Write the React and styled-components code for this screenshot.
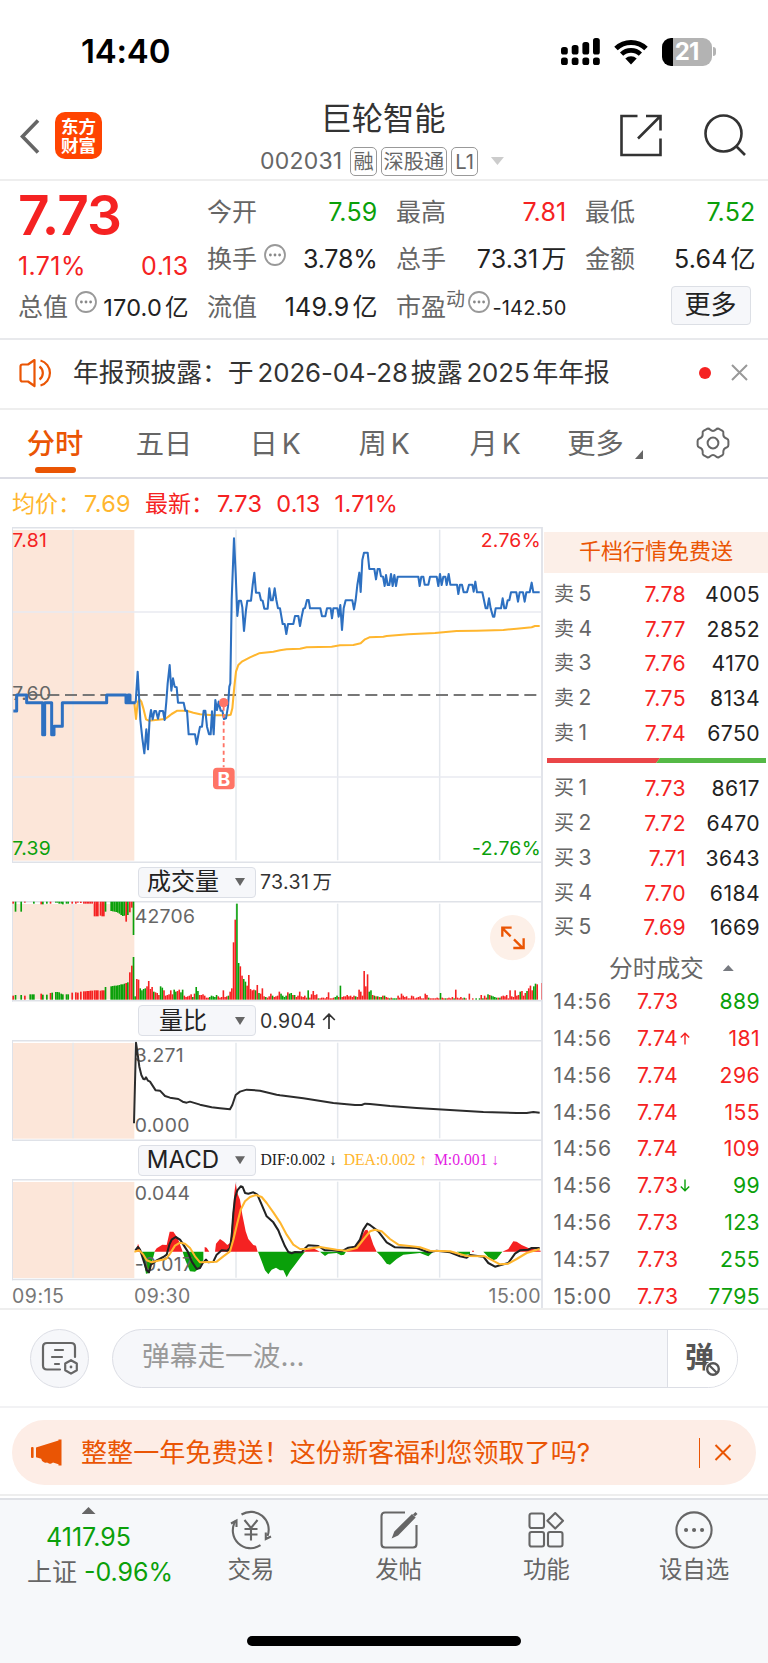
import styled, { createGlobalStyle } from "styled-components";

const RED = "#f52222";
const GREEN = "#0aa00a";
const ORANGE = "#ea5504";
const GRAY = "#666";
const YELLOW = "#ffb62e";

const sells = [
    ["卖", 5, "7.78", 4005],
    ["卖", 4, "7.77", 2852],
    ["卖", 3, "7.76", 4170],
    ["卖", 2, "7.75", 8134],
    ["卖", 1, "7.74", 6750],
];

const buys = [
    ["买", 1, "7.73", 8617],
    ["买", 2, "7.72", 6470],
    ["买", 3, "7.71", 3643],
    ["买", 4, "7.70", 6184],
    ["买", 5, "7.69", 1669],
];

const deals = [
    { time: "14:56", price: "7.73", volume: 889, color: GREEN },
    { time: "14:56", price: "7.74", arrow: "up", volume: 181, color: RED },
    { time: "14:56", price: "7.74", volume: 296, color: RED },
    { time: "14:56", price: "7.74", volume: 155, color: RED },
    { time: "14:56", price: "7.74", volume: 109, color: RED },
    { time: "14:56", price: "7.73", arrow: "down", volume: 99, color: GREEN },
    { time: "14:56", price: "7.73", volume: 123, color: GREEN },
    { time: "14:57", price: "7.73", volume: 255, color: GREEN },
    { time: "15:00", price: "7.73", volume: 7795, color: GREEN },
];

// chart units are a third of a pixel
const PRE_PRICE = "40,573 50,573 50,525 80,525 80,548 128,548 128,644 134,644 134,548 155,548 155,644 162,644 162,619 187,619 187,548 320,548 320,525 378,525 378,548 384,548 384,525 390,525 390,548 407,548";
const AM_PRICE = "407,548 413,455 421,600 427,655 433,700 439,628 444,688 449,595 453,570 458,598 463,573 468,573 474,596 479,573 489,573 494,600 499,545 503,490 509,435 514,512 519,475 524,500 530,502 534,548 551,548 556,572 561,572 566,643 585,643 590,673 595,645 600,620 606,620 611,572 616,572 621,620 627,643 632,643 636,574 641,643 646,540 651,570 656,545 662,572 667,572 672,597 678,595 684,560 688,500 691,490 695,240 702,55 707,160 712,288 717,242 723,242 727,262 732,333 738,270 742,242 753,242 758,195 763,158 768,218 778,218 783,241 788,242 793,266 803,266 808,205 813,241 818,241 824,205 829,240 834,265";
const PM_PRICE = "30,265 38,312 44,312 49,342 54,312 70,312 75,288 85,288 90,318 95,290 100,266 105,264 111,240 116,240 120,265 151,265 156,289 166,289 171,265 182,265 186,295 190,265 202,265 206,290 211,255 216,330 221,265 227,241 247,241 252,268 257,240 262,195 268,158 272,216 277,120 282,98 293,98 298,147 313,147 318,178 323,147 329,147 333,169 339,170 344,198 348,165 353,195 358,195 363,162 368,198 373,165 378,198 383,170 445,170 449,198 454,170 460,170 464,194 475,194 480,170 500,170 505,198 510,162 515,195 520,170 526,170 530,195 536,162 541,194 561,194 565,222 570,194 576,194 581,217 591,217 597,194 607,194 611,215 616,185 621,217 637,217 647,265 652,265 657,235 662,265 669,290 673,290 677,265 693,265 698,235 703,265 708,265 713,241 718,241 723,217 739,217 744,245 749,217 759,217 764,245 769,217 779,217 785,188 790,217 809,217";
const AM_AVG = "403,548 408,597 413,548 418,537 424,545 430,565 438,598 446,602 495,597 505,590 515,582 532,572 560,572 580,578 600,583 640,586 685,586 692,584 697,565 703,500 708,455 715,435 727,424 750,412 777,400 820,395";
const PM_AVG = "30,391 50,388 90,386 110,382 185,380 210,376 250,375 272,370 285,358 298,352 340,350 350,348 415,343 495,339 560,333 620,332 700,330 740,326 785,322 795,318 809,318";
const AM_RATIO = "402,790 408,548 412,575 418,620 424,645 430,657 434,658 438,652 444,662 450,665 467,691 480,692 495,708 510,713 535,717 548,725 560,728 570,725 600,734 635,742 660,745 690,748 697,735 707,705 720,695 740,689 780,692 830,704";
const PM_RATIO = "30,706 100,715 190,729 255,735 275,735 285,731 300,732 360,738 440,744 540,750 640,756 740,759 770,759 790,756 809,758";
const AM_DIF = "406,332 414,322 420,330 425,345 433,370 440,392 447,398 453,375 470,362 490,352 500,345 508,315 515,300 527,292 540,300 550,315 563,335 575,365 590,388 600,385 608,370 618,360 625,368 640,366 650,345 665,332 682,333 690,325 695,290 700,220 705,175 712,152 722,140 728,142 735,160 745,162 760,158 772,165 785,195 800,230 820,248 835,272";
const PM_DIF = "30,285 45,320 55,337 65,341 75,337 95,338 103,328 115,317 145,319 165,332 185,332 215,335 235,324 255,321 270,300 280,270 292,252 300,256 325,275 350,308 375,323 440,325 475,338 500,333 540,338 570,350 590,354 600,346 640,351 655,370 675,381 690,377 715,370 735,342 750,332 775,330 785,325 809,325";
const AM_DEA = "403,336 418,332 430,345 440,362 455,368 480,362 498,358 510,342 525,318 540,309 555,312 570,325 585,350 600,368 650,366 670,350 690,335 700,300 712,250 722,210 735,185 750,172 768,166 785,172 800,190 820,218";
const PM_DEA = "30,248 50,285 70,315 90,328 110,328 150,322 200,330 228,333 260,325 280,300 300,275 315,270 335,275 360,298 385,315 450,323 480,333 540,335 590,349 645,350 690,374 715,372 740,358 770,340 809,328";

const AM_MACD_UP = "M408 336L414 312L424 336Z M463 336L470 326L487 315L500 316L509 276L520 276L533 295L548 336Z M614 336V322L620 324L628 336Z M645 336L648 312L660 298L672 306L682 316L690 310L697 240L703 160L707 130L712 160L720 180L727 225L737 275L745 298L760 316L768 318L773 336Z";
const AM_MACD_DOWN = "M424 336L430 360L438 402L448 400L455 370L464 336Z M548 336L556 362L570 395L585 396L598 385L610 360V336Z M774 336L785 365L795 392L805 404L815 390L828 384L840 392H850L860 413L870 395L885 375L900 355L915 336Z";
const PM_MACD_UP = "M100 336L115 326H130L150 336Z M228 336L250 325L262 315L275 290L285 272L292 270L300 285L310 315L320 336Z M606 336V333H612V336Z M697 336L715 328L730 305L740 306L755 316L775 325L812 333V336Z";
const PM_MACD_DOWN = "M150 336L165 349L175 342L200 340L213 347L222 345L228 336Z M320 336L335 352L350 372L360 375L380 358L400 345L450 340L475 350L490 336Z M560 336L580 346L600 344V336Z M640 336L655 352L670 362L680 358L697 336Z";

const VOLUME = (
    "g10 r62 r60 g34 g28 g32 g34 r40 r56 r32 r38 g24 r22 r20 r14 g40 g36 r28 r12 r14 r16 r28 r16 g30 g24 r26 r30 g22 g30 r12 " +
    "r8 r10 r12 r16 g8 r18 g38 g26 r14 r14 r16 r12 r6 r6 g8 g12 g10 g8 g14 r10 r6 r8 r28 r8 r10 g12 r24 " +
    "r34 r172 r240 g288 g110 r100 r72 g62 g54 r42 r74 r32 r28 r30 g28 r44 g20 r18 r34 r10 g8 r6 r10 r18 g12 r8 r10 r12 r24 g18 " +
    "g12 g8 g12 r22 g18 g20 r14 g14 r8 r12 r24 r10 r8 r12 r6 g28 r6 r16 r26 r14 r16 g4 r4 r6 r6 r4 r8 r22 " +
    "r4 r4 r6 g8 g12 r8 g42 r8 r10 r10 r14 r10 r12 r8 r12 g10 r8 r30 r24 r12 r86 r40 r76 g24 g28 r14 g12 r10 " +
    "g10 r8 g8 r12 g12 r8 r6 g4 r6 g4 g4 g4 r12 r6 r18 r12 r8 r10 r4 r4 r12 r10 r4 r6 r8 r10 r4 r4 r18 r14 " +
    "g6 r4 r4 r4 r4 r6 r4 g20 r6 r4 g4 r4 r6 r4 r8 g4 r30 r6 r4 r8 r4 g6 r4 r0 r18 r0 r4 r0 " +
    "g4 r0 g4 r14 g4 r12 r6 g16 r14 g12 g10 g8 g6 r6 g6 r10 r12 r10 r14 r4 r28 r10 r8 r28 r12 r14 g24 " +
    "r26 r12 r20 g26 r34 r42 r28 g40 g48 r46 r0 r0 r50"
).split(" ");

// call auction: matched volume grows from the bottom, unmatched hangs from the top
const AUCTION = [
    [37, "r", 12, 6], [44, "g", 14, 30], [61, "g", 14, 30], [72, "r", 12, 3], [88, "g", 16, 0], [94, "g", 16, 0],
    [99, "g", 16, 6], [121, "r", 18, 8], [126, "g", 15, 8], [138, "g", 15, 6], [149, "r", 20, 6], [154, "g", 21, 0],
    [165, "g", 23, 3], [170, "g", 23, 3], [175, "g", 22, 6], [181, "g", 18, 6], [186, "g", 16, 8], [197, "g", 16, 6],
    [202, "g", 16, 6], [214, "r", 21, 6], [225, "r", 22, 6], [231, "r", 21, 3], [240, "r", 24, 4], [249, "r", 25, 6],
    [254, "r", 25, 6], [259, "r", 26, 6], [264, "r", 26, 6], [269, "r", 27, 6], [274, "r", 27, 6], [281, "r", 28, 44],
    [286, "r", 28, 44], [291, "r", 28, 44], [299, "r", 27, 42], [304, "r", 28, 44], [309, "r", 28, 44], [314, "g", 38, 30],
    [331, "g", 40, 28], [336, "g", 41, 29], [341, "g", 42, 30], [346, "g", 42, 31], [351, "g", 43, 33], [356, "g", 44, 36],
    [361, "g", 46, 40], [366, "g", 46, 43], [371, "g", 48, 42], [376, "r", 50, 60], [381, "g", 52, 40], [387, "r", 82, 32],
    [393, "r", 102, 18], [398, "g", 128, 100],
];

const barColor = { r: RED, g: GREEN };

function Pane({ y, height, guides, children }) {
    return (
        <PaneSvg $height={height / 3} viewBox={`36 ${y} 1590 ${height}`}>
            <rect x="38" y={y + 9} width="365" height={height - 16} fill="#fce6d9" />
            {[219, 708, 1013, 1319].map((x) => (
                <path key={x} d={`M${x} ${y + 8}V${y + height - 8}`} stroke="#e4e8ed" strokeWidth="4.5" />
            ))}
            {guides?.map((gy) => (
                <path key={gy} d={`M38 ${gy}H1624`} stroke="#e8eaf0" strokeWidth="4.5" />
            ))}
            <path d={`M36 ${y + 2}H1626M36 ${y + height - 2.5}H1626`} stroke="#dfe2e8" strokeWidth="4.5" />
            <path d={`M37.5 ${y}V${y + height}`} stroke="#dfe2e9" strokeWidth="3" />
            {children}
        </PaneSvg>
    );
}

function Line({ am, pm, color, width = 4.5 }) {
    const shifted = pm.split(" ").map((p) => {
        const [x, y] = p.split(",");
        return `${+x + 810},${y}`;
    });
    return <polyline points={`${am} ${shifted.join(" ")}`} fill="none" stroke={color} strokeWidth={width} strokeLinejoin="round" />;
}

function PriceChart() {
    return (
        <Pane y={21} height={1008} guides={[276, 771]}>
            <path d="M38 525H1614" stroke="#777" strokeWidth="6.5" strokeDasharray="36 17" strokeDashoffset="2" />
            <ChartText x="37" y="80" fill={RED}>7.81</ChartText>
            <ChartText x="37" y="541" fill={GRAY}>7.60</ChartText>
            <ChartText x="37" y="1004" fill={GREEN}>7.39</ChartText>
            <ChartText x="1623" y="80" fill={RED} textAnchor="end">2.76%</ChartText>
            <ChartText x="1623" y="1004" fill={GREEN} textAnchor="end">-2.76%</ChartText>
            <Line am={AM_AVG} pm={PM_AVG} color={YELLOW} width={6.2} />
            <polyline points={PRE_PRICE} fill="none" stroke="#2d70c1" strokeWidth="9" strokeLinejoin="round" />
            <Line am={AM_PRICE} pm={PM_PRICE} color="#2d70c1" width={6.2} />
            <path d="M671 560V742" stroke="#ff7466" strokeWidth="5.5" strokeDasharray="12 10" />
            <circle cx="671" cy="548" r="14" fill="#ff7466" />
            <rect x="639" y="743" width="65" height="65" rx="12" fill="#ff7466" />
            <BuyMark x="671.5" y="797">B</BuyMark>
        </Pane>
    );
}

function VolumeChart() {
    return (
        <Pane y={122} height={302}>
            {AUCTION.map(([x, c, h, top]) => (
                <g key={x} fill={barColor[c]}>
                    <rect x={x} y={418 - h} width="5" height={h} />
                    <rect x={x} y="124" width="5" height={top} />
                </g>
            ))}
            {VOLUME.map((v, i) => {
                const h = +v.slice(1);
                return <rect key={i} x={403 + i * 5.09} y={418 - h} width="4.8" height={h} fill={barColor[v[0]]} />;
            })}
            <ChartText x="404" y="187" fill={GRAY}>42706</ChartText>
            <circle cx="1538" cy="232" r="68" fill="#fdf0e8" />
            <path d="M1532 228L1508 204M1507 229V202H1535M1542 237L1567 262M1571 234V263H1540" fill="none" stroke={ORANGE} strokeWidth="7" />
        </Pane>
    );
}

function RatioChart() {
    return (
        <Pane y={540} height={303}>
            <ChartText x="404" y="605" fill={GRAY}>3.271</ChartText>
            <ChartText x="404" y="817" fill={GRAY}>0.000</ChartText>
            <Line am={AM_RATIO} pm={PM_RATIO} color="#2c2c2c" width={6} />
        </Pane>
    );
}

function MacdChart() {
    return (
        <Pane y={118} height={304}>
            <path d={AM_MACD_UP} fill={RED} />
            <path d={AM_MACD_DOWN} fill={GREEN} />
            <path d={PM_MACD_UP} fill={RED} transform="translate(810)" />
            <path d={PM_MACD_DOWN} fill={GREEN} transform="translate(810)" />
            <ChartText x="404" y="182" fill={GRAY}>0.044</ChartText>
            <ChartText x="404" y="395" fill={GRAY}>-0.017</ChartText>
            <Line am={AM_DIF} pm={PM_DIF} color="#222" width={6.2} />
            <Line am={AM_DEA} pm={PM_DEA} color={YELLOW} width={6.2} />
        </Pane>
    );
}

function Indicator({ name, children }) {
    return (
        <IndicatorBar>
            <IndicatorSelect>
                <span>{name}</span>
                <Triangle $w={10} $h={8} $down />
            </IndicatorSelect>
            {children}
        </IndicatorBar>
    );
}

function InfoDots() {
    return (
        <InfoIcon viewBox="0 0 24 24">
            <circle cx="12" cy="12" r="10" fill="none" stroke="#999" strokeWidth="1.8" />
            <circle cx="7.4" cy="12" r="1.4" fill="#888" />
            <circle cx="12" cy="12" r="1.4" fill="#888" />
            <circle cx="16.6" cy="12" r="1.4" fill="#888" />
        </InfoIcon>
    );
}

function StatusBar() {
    return (
        <Status>
            <Clock>14:40</Clock>
            <StatusIcons>
                <svg width="39" height="28" viewBox="0 0 39 28">
                    {[[0, 9], [10.7, 7], [21.4, 4], [32, 0]].map(([x, y]) => (
                        <g key={x}>
                            <rect x={x} y={y} width="6.8" height={16.5 - y} rx="2.6" />
                            <rect x={x} y="19.5" width="6.8" height="7.5" rx="2.6" />
                        </g>
                    ))}
                </svg>
                <svg width="34" height="26" viewBox="0 0 34 26">
                    <path d="M2 9.5A21.5 21.5 0 0 1 32 9.5" fill="none" stroke="#000" strokeWidth="5" />
                    <path d="M7.6 15.2A13.5 13.5 0 0 1 26.4 15.2" fill="none" stroke="#000" strokeWidth="4.6" />
                    <path d="M17 25.5L11.3 19.6A8.2 8.2 0 0 1 22.7 19.6Z" />
                </svg>
                <Battery>
                    <BatteryBody>21</BatteryBody>
                    <BatteryTip />
                </Battery>
            </StatusIcons>
        </Status>
    );
}

function Header() {
    return (
        <HeaderBar>
            <HeaderLeft>
                <svg width="20" height="35" viewBox="0 0 20 35">
                    <path d="M18 1.5L2.5 17.5L18 33.5" fill="none" stroke="#666" strokeWidth="3.6" />
                </svg>
                <AppLogo>
                    <span>东方</span>
                    <span>财富</span>
                </AppLogo>
            </HeaderLeft>
            <TitleBlock>
                <Title>巨轮智能</Title>
                <CodeRow>
                    <Code>002031</Code>
                    <Badge>融</Badge>
                    <Badge>深股通</Badge>
                    <Badge $pad={3}>L1</Badge>
                    <CodeCaret $w={13} $h={8} $down $color="#ccc" />
                </CodeRow>
            </TitleBlock>
            <HeaderRight>
                <svg width="44" height="44" viewBox="0 0 44 44" fill="none" stroke="#333" strokeWidth="2.6">
                    <path d="M18.5 3H2.5V42H41.5V25.5" />
                    <path d="M27 3H41.5V17.5M41 3.5L19 25.5" />
                </svg>
                <svg width="44" height="44" viewBox="0 0 44 44" fill="none" stroke="#333" strokeWidth="2.6">
                    <circle cx="20.5" cy="20.5" r="18" />
                    <path d="M33.5 33.5L42 42" />
                </svg>
            </HeaderRight>
        </HeaderBar>
    );
}

function Quote() {
    return (
        <QuotePanel>
            <QuoteColumn>
                <LastPrice>7.73</LastPrice>
                <ChangeRow>
                    <span>1.71%</span>
                    <span>0.13</span>
                </ChangeRow>
                <QuoteRow>
                    <Label>总值<InfoDots /></Label>
                    <Value $size={23.5}>170.0<Unit>亿</Unit></Value>
                </QuoteRow>
            </QuoteColumn>
            <QuoteColumn>
                <QuoteRow><Label>今开</Label><Value $color={GREEN}>7.59</Value></QuoteRow>
                <QuoteRow><Label>换手<InfoDots /></Label><Value $spacing={-0.2}>3.78%</Value></QuoteRow>
                <QuoteRow><Label>流值</Label><Value>149.9<Unit>亿</Unit></Value></QuoteRow>
            </QuoteColumn>
            <QuoteColumn>
                <QuoteRow><Label>最高</Label><Value $color={RED}>7.81</Value></QuoteRow>
                <QuoteRow><Label>总手</Label><Value>73.31<Unit>万</Unit></Value></QuoteRow>
                <QuoteRow><Label>市盈<Sup>动</Sup><InfoDots /></Label><Value $size={20} $drop={3}>-142.50</Value></QuoteRow>
            </QuoteColumn>
            <QuoteColumn>
                <QuoteRow><Label>最低</Label><Value $color={GREEN}>7.52</Value></QuoteRow>
                <QuoteRow><Label>金额</Label><Value>5.64<Unit>亿</Unit></Value></QuoteRow>
                <QuoteRow $end><MoreButton>更多</MoreButton></QuoteRow>
            </QuoteColumn>
        </QuotePanel>
    );
}

function Notice() {
    return (
        <NoticeBar>
            <svg width="34" height="30" viewBox="0 0 34 30" fill="none" stroke={ORANGE} strokeWidth="2.2" strokeLinejoin="round">
                <path d="M15.5 2L9 6.5H3.5Q1.5 6.5 1.5 8.5V21.5Q1.5 23.5 3.5 23.5H9L15.5 28Z" />
                <path d="M20.5 8.5A8 8 0 0 1 20.5 21.5M21.5 2.5A13 13 0 0 1 21.5 27.5" />
            </svg>
            <NoticeText>
                年报预披露：于<Latin>2026-04-28</Latin>披露<Latin>2025</Latin>年年报
            </NoticeText>
            <RedDot />
            <svg width="17" height="17" viewBox="0 0 17 17" stroke="#999" strokeWidth="2">
                <path d="M1 1L16 16M16 1L1 16" />
            </svg>
        </NoticeBar>
    );
}

function Tabs() {
    return (
        <TabBar>
            <Tab $active>分时</Tab>
            <Tab>五日</Tab>
            <Tab>日<Latin>K</Latin></Tab>
            <Tab>周<Latin>K</Latin></Tab>
            <Tab>月<Latin>K</Latin></Tab>
            <Tab>更多<CornerMark viewBox="0 0 8 9"><path d="M8 0V9H0Z" /></CornerMark></Tab>
            <GearTab>
                <svg width="34" height="32" viewBox="0 0 34 32" fill="none" stroke="#666" strokeWidth="2">
                    <path d="M11 1.8Q13 1.2 14 2.6Q17 5.4 20 2.6Q21 1.2 23 1.8L26.5 3.8Q27.8 4.8 27.3 6.5Q27 10.5 31 11.8Q32.4 12.3 32.4 14V18Q32.4 19.7 31 20.2Q27 21.5 27.3 25.5Q27.8 27.2 26.5 28.2L23 30.2Q21 30.8 20 29.4Q17 26.6 14 29.4Q13 30.8 11 30.2L7.5 28.2Q6.2 27.2 6.7 25.5Q7 21.5 3 20.2Q1.6 19.7 1.6 18V14Q1.6 12.3 3 11.8Q7 10.5 6.7 6.5Q6.2 4.8 7.5 3.8Z" />
                    <circle cx="17" cy="16" r="5.4" />
                </svg>
            </GearTab>
        </TabBar>
    );
}

function BookRow({ side, level, price, volume }) {
    return (
        <BookLine>
            <BookSide>{side}<i>{level}</i></BookSide>
            <BookPrice>{price}</BookPrice>
            <BookVolume>{volume}</BookVolume>
        </BookLine>
    );
}

function DealArrow({ dir }) {
    return (
        <svg width="10" height="13" viewBox="0 0 10 13" fill="none" stroke={dir === "up" ? RED : GREEN} strokeWidth="1.4">
            <path d={dir === "up" ? "M5 12.5V1.5M0.8 5.6L5 1.2L9.2 5.6" : "M5 0.5V11.5M0.8 7.4L5 11.8L9.2 7.4"} />
        </svg>
    );
}

function OrderBook() {
    return (
        <Book>
            <Promo>千档行情免费送</Promo>
            <BookGroup>
                {sells.map(([side, level, price, volume]) => (
                    <BookRow key={level} side={side} level={level} price={price} volume={volume} />
                ))}
            </BookGroup>
            <RatioBar viewBox="0 0 219 5">
                <path d="M0 0H113L109 5H0Z" fill="#ea4648" />
                <path d="M113 0H219V5H109Z" fill="#55b946" />
            </RatioBar>
            <BookGroup>
                {buys.map(([side, level, price, volume]) => (
                    <BookRow key={level} side={side} level={level} price={price} volume={volume} />
                ))}
            </BookGroup>
            <DealsTitle>分时成交<Triangle $w={11} $h={6} $color="#777a80" /></DealsTitle>
            {deals.map((d, i) => (
                <DealLine key={i}>
                    <DealTime>{d.time}</DealTime>
                    <DealPrice>{d.price}{d.arrow && <DealArrow dir={d.arrow} />}</DealPrice>
                    <DealVolume $color={d.color}>{d.volume}</DealVolume>
                </DealLine>
            ))}
        </Book>
    );
}

function DanmuBar() {
    return (
        <Danmu>
            <RoundButton>
                <svg width="38" height="34" viewBox="0 0 38 34" fill="none" stroke="#666" strokeWidth="2.2" strokeLinecap="round">
                    <path d="M19 28.5H6Q2 28.5 2 24.5V6Q2 2 6 2H30Q34 2 34 6V16" />
                    <path d="M14 9H22M11 16H21M14 23H18" />
                    <path d="M30 19.2L35.8 22.5V29.2L30 32.6L24.2 29.2V22.5Z" strokeLinejoin="round" />
                    <circle cx="30" cy="26" r="1.4" fill="#666" stroke="none" />
                </svg>
            </RoundButton>
            <DanmuInput>
                <Placeholder>弹幕走一波...</Placeholder>
                <DanmuToggle>
                    <span>弹</span>
                    <BanIcon viewBox="0 0 16 16">
                        <circle cx="8" cy="8" r="8" fill="#fff" />
                        <circle cx="8" cy="8" r="5.8" fill="none" stroke="#555" strokeWidth="2.4" />
                        <path d="M4.5 4.5L11.5 11.5" stroke="#555" strokeWidth="2.2" />
                    </BanIcon>
                </DanmuToggle>
            </DanmuInput>
        </Danmu>
    );
}

function Banner() {
    return (
        <BannerWrap>
            <BannerPill>
                <svg width="31" height="27" viewBox="0 0 31 27" fill={ORANGE}>
                    <rect x="0" y="8" width="2.6" height="11" rx="1" />
                    <path d="M5 8.5L27.5 1.5V0.5H30.5V26.5H27.5V25.2L22 23.5Q20.5 25.2 18 24.4L16 23.6Q14.6 24 13 23.2Q10.4 22.2 10.2 19.8L5 18.2Z" />
                </svg>
                <BannerText>整整一年免费送！这份新客福利您领取了吗?</BannerText>
                <BannerDivider />
                <svg width="18" height="17" viewBox="0 0 18 17" stroke={ORANGE} strokeWidth="2">
                    <path d="M1.5 1L16.5 16M16.5 1L1.5 16" />
                </svg>
            </BannerPill>
        </BannerWrap>
    );
}

function BottomNav() {
    return (
        <Nav>
            <IndexBlock>
                <Triangle $w={14} $h={7} />
                <IndexValue>4117.95</IndexValue>
                <IndexChange>上证<span>-0.96%</span></IndexChange>
            </IndexBlock>
            <NavItem>
                <NavIcon viewBox="0 0 42 40">
                    <path d="M11.5 4.5A17.8 17.8 0 0 1 37.5 26M30.5 35.2A17.8 17.8 0 0 1 5.5 11" />
                    <path d="M1 13.5L6.5 10.5V17M41 26.5L35.8 29V22.5" />
                    <path d="M14.5 10L21 18L27.5 10M21 18V30.5M14.5 19H27.5M14.5 24.5H27.5" />
                </NavIcon>
                交易
            </NavItem>
            <NavItem>
                <NavIcon viewBox="0 0 42 40">
                    <path d="M27 2.5H7Q3.5 2.5 3.5 6V34Q3.5 37.5 7 37.5H35Q38.5 37.5 38.5 34V15" />
                    <path d="M15.5 26.5L17.2 22L34 5.4L36.2 7.6L19.5 24.6Z" fill="#666" />
                    <path d="M36.2 3.2L38.2 5.2" strokeWidth="3.6" />
                </NavIcon>
                发帖
            </NavItem>
            <NavItem>
                <NavIcon viewBox="0 0 42 40">
                    <rect x="4.5" y="3.5" width="14.5" height="14.5" rx="2" />
                    <rect x="4.5" y="22" width="14.5" height="14.5" rx="2" />
                    <rect x="23" y="22" width="14.5" height="14.5" rx="2" />
                    <path d="M30.2 3L38 10.8L30.2 18.6L22.4 10.8Z" strokeLinejoin="round" />
                </NavIcon>
                功能
            </NavItem>
            <NavItem>
                <NavIcon viewBox="0 0 42 40">
                    <circle cx="21" cy="20" r="17.6" />
                    <path d="M13 20H13.1M21 20H21.1M29 20H29.1" strokeWidth="4" strokeLinecap="round" />
                </NavIcon>
                设自选
            </NavItem>
        </Nav>
    );
}

function App() {
    return (
        <Screen>
            <GlobalStyle />
            <StatusBar />
            <Header />
            <Quote />
            <Notice />
            <Tabs />
            <Legend>
                <Avg>均价：<b>7.69</b></Avg>
                <Latest>最新：<b>7.73</b><b>0.13</b><b>1.71%</b></Latest>
            </Legend>
            <Main>
                <Charts>
                    <PriceChart />
                    <Indicator name="成交量">
                        <IndicatorValue>73.31<Unit>万</Unit></IndicatorValue>
                    </Indicator>
                    <VolumeChart />
                    <Indicator name="量比">
                        <IndicatorValue>
                            0.904
                            <svg width="14" height="16" viewBox="0 0 14 16" fill="none" stroke="#333" strokeWidth="1.7">
                                <path d="M7 16V1.5M1.2 7L7 1.2L12.8 7" />
                            </svg>
                        </IndicatorValue>
                    </Indicator>
                    <RatioChart />
                    <Indicator name="MACD">
                        <MacdValue $color="#222">DIF:0.002 ↓</MacdValue>
                        <MacdValue $color={YELLOW}>DEA:0.002 ↑</MacdValue>
                        <MacdValue $color="#e31be3">M:0.001 ↓</MacdValue>
                    </Indicator>
                    <MacdChart />
                    <TimeAxis>
                        <StartTime>09:15</StartTime>
                        <span>09:30</span>
                        <EndTime>15:00</EndTime>
                    </TimeAxis>
                </Charts>
                <OrderBook />
            </Main>
            <DanmuBar />
            <Banner />
            <BottomNav />
            <HomeArea><HomeIndicator /></HomeArea>
        </Screen>
    );
}

export default App;

const GlobalStyle = createGlobalStyle`
    * {
        box-sizing: border-box;
    }
    body {
        margin: 0;
        background-color: white;
    }
    svg {
        display: block;
        flex: none;
    }
`;

const Screen = styled.div`
    width: 768px;
    height: 1663px;
    overflow: hidden;
    display: flex;
    flex-direction: column;
    background-color: white;
    color: #333;
    font-family: Inter, "Noto Sans CJK SC", sans-serif;
    font-weight: 400;
    white-space: nowrap;
`;

const Triangle = styled.i`
    width: ${(props) => props.$w}px;
    height: ${(props) => props.$h}px;
    background-color: ${(props) => props.$color || "#666"};
    clip-path: ${(props) => props.$down ? "polygon(0 0, 100% 0, 50% 100%)" : "polygon(50% 0, 100% 100%, 0 100%)"};
`;

const Status = styled.div`
    height: 103px;
    flex: none;
    padding: 0 52px 0 81px;
    display: flex;
    justify-content: space-between;
    align-items: center;
`;

const Clock = styled.div`
    margin-top: -2px;
    font-size: 33px;
    font-weight: 600;
    letter-spacing: -0.2px;
    color: black;
`;

const StatusIcons = styled.div`
    display: flex;
    align-items: center;
    gap: 14px;
`;

const Battery = styled.div`
    display: flex;
    align-items: center;
    gap: 1px;
`;

const BatteryBody = styled.div`
    width: 50px;
    height: 28px;
    border-radius: 9px;
    background: linear-gradient(90deg, black 11px, #b3b3b3 11px);
    color: white;
    font-size: 24px;
    font-weight: 700;
    line-height: 28px;
    letter-spacing: -1px;
    text-align: center;
    padding-right: 1px;
`;

const BatteryTip = styled.div`
    width: 3px;
    height: 9px;
    border-radius: 0 3px 3px 0;
    background-color: #b3b3b3;
`;

const HeaderBar = styled.div`
    height: 78px;
    flex: none;
    display: grid;
    grid-template-columns: 200px 1fr 200px;
    border-bottom: 2px solid #eee;
`;

const HeaderLeft = styled.div`
    display: flex;
    align-items: flex-start;
    padding: 9px 0 0 20px;
    gap: 15px;
    > svg {
        margin-top: 7px;
    }
`;

const AppLogo = styled.div`
    width: 47px;
    height: 47px;
    border-radius: 10px;
    background-color: #ff4401;
    color: white;
    font-size: 17.5px;
    font-weight: 700;
    line-height: 19px;
    display: flex;
    flex-direction: column;
    align-items: center;
    justify-content: center;
`;

const TitleBlock = styled.div`
    display: flex;
    flex-direction: column;
    align-items: center;
`;

const Title = styled.div`
    font-size: 31.3px;
    line-height: 33px;
    margin-left: -2px;
`;

const CodeRow = styled.div`
    display: flex;
    align-items: center;
    height: 30px;
    margin-top: 10px;
    margin-left: -4px;
    gap: 4px;
`;

const Code = styled.span`
    font-size: 23px;
    color: #666;
    letter-spacing: 0.2px;
    margin-right: 4px;
`;

const Badge = styled.span`
    height: 29px;
    padding: 0 ${(props) => props.$pad || 2}px;
    border: 1.5px solid #999;
    border-radius: 5px;
    color: #666;
    font-size: 20.2px;
    line-height: 27px;
`;

const CodeCaret = styled(Triangle)`
    margin-left: 9px;
`;

const HeaderRight = styled.div`
    display: flex;
    gap: 40px;
    padding: 10px 0 0 51px;
`;

const QuotePanel = styled.div`
    height: 159px;
    flex: none;
    display: grid;
    grid-template-columns: repeat(4, 170.5px);
    column-gap: 18.5px;
    padding: 8px 0 0 18px;
    border-bottom: 2px solid #e8e9ec;
`;

const QuoteColumn = styled.div`
    display: flex;
    flex-direction: column;
`;

const QuoteRow = styled.div`
    height: 47.3px;
    display: flex;
    align-items: center;
    justify-content: ${(props) => props.$end ? "flex-end" : "space-between"};
`;

const LastPrice = styled.div`
    height: 52px;
    color: ${RED};
    font-size: 55px;
    font-weight: 600;
    line-height: 52px;
    letter-spacing: -1px;
`;

const ChangeRow = styled.div`
    height: 42.6px;
    display: flex;
    justify-content: space-between;
    padding-top: 4px;
    color: ${RED};
    font-size: 25px;
    line-height: 42px;
    letter-spacing: 0.4px;
`;

const Label = styled.span`
    display: flex;
    align-items: center;
    color: ${GRAY};
    font-size: 25px;
    line-height: 47px;
`;

const Value = styled.span`
    color: ${(props) => props.$color || "#222"};
    font-size: ${(props) => props.$size || 25}px;
    line-height: 47px;
    letter-spacing: ${(props) => props.$spacing ?? 0.2}px;
    padding-top: ${(props) => props.$drop || 0}px;
`;

const Unit = styled.span`
    margin-left: 3px;
    letter-spacing: 0;
`;

const Sup = styled.span`
    font-size: 19px;
    margin-top: -15px;
`;

const InfoIcon = styled.svg`
    width: 24px;
    height: 24px;
    margin: -10px -5px 0 6px;
    ${Sup} + & {
        margin-left: 2px;
    }
`;

const MoreButton = styled.button`
    width: 80px;
    height: 39px;
    margin: -4px 5px 0 0;
    border: 1.5px solid #dcdfe5;
    border-radius: 4px;
    background-color: #f6f7fa;
    color: #222;
    font-family: inherit;
    font-size: 26px;
    line-height: 34px;
    padding: 0;
`;

const NoticeBar = styled.div`
    height: 70px;
    flex: none;
    display: flex;
    align-items: center;
    padding: 0 20px 3px 19px;
    border-bottom: 2px solid #eee;
`;

const NoticeText = styled.div`
    flex: 1;
    margin: 1px 0 0 20px;
    font-size: 25.8px;
    line-height: 40px;
`;

const Latin = styled.span`
    margin: 0 3px 0 4px;
    letter-spacing: -0.1px;
`;

const RedDot = styled.div`
    width: 12px;
    height: 12px;
    border-radius: 50%;
    margin-right: 20px;
    background-color: ${RED};
`;

const TabBar = styled.div`
    height: 69px;
    flex: none;
    display: flex;
    border-bottom: 2px solid #dcdde5;
`;

const Tab = styled.div`
    width: 110px;
    display: flex;
    justify-content: center;
    position: relative;
    color: ${(props) => props.$active ? ORANGE : GRAY};
    font-size: 28.3px;
    font-weight: ${(props) => props.$active ? 500 : 400};
    line-height: 68px;
    &:nth-child(2), &:nth-child(4) {
        padding-right: 2px;
    }
    ${Latin} {
        margin-right: 0;
    }
    &::after {
        content: "";
        display: ${(props) => props.$active ? "block" : "none"};
        position: absolute;
        bottom: 4px;
        width: 41px;
        height: 6px;
        border-radius: 3px;
        background-color: ${ORANGE};
    }
`;

const CornerMark = styled.svg`
    width: 8px;
    height: 9px;
    fill: #666;
    margin: 40px 0 0 11px;
`;

const GearTab = styled.div`
    flex: 1;
    display: flex;
    justify-content: center;
    padding: 17px 2px 0 0;
`;

const Legend = styled.div`
    height: 48px;
    flex: none;
    display: flex;
    padding-left: 12px;
    gap: 14px;
    font-size: 23px;
    line-height: 50px;
    b {
        font-weight: 400;
        font-size: 23.5px;
        letter-spacing: 0.3px;
    }
    b + b {
        margin-left: 14px;
    }
`;

const Avg = styled.span`
    color: ${YELLOW};
    b {
        margin-left: 3px;
    }
`;

const Latest = styled.span`
    color: ${RED};
    b:first-child {
        margin-left: 3px;
    }
`;

const Main = styled.div`
    height: 783px;
    flex: none;
    display: flex;
    border-bottom: 2px solid #eee;
`;

const Charts = styled.div`
    width: 531px;
    margin-left: 12px;
    display: flex;
    flex-direction: column;
    border-right: 2px solid #e2e4ea;
`;

const PaneSvg = styled.svg`
    width: 530px;
    height: ${(props) => props.$height}px;
`;

const ChartText = styled.text`
    font-size: 58px;
    letter-spacing: 1px;
`;

const BuyMark = styled.text`
    font-size: 58px;
    font-weight: 700;
    fill: white;
    text-anchor: middle;
`;

const IndicatorBar = styled.div`
    height: 38.2px;
    flex: none;
    display: flex;
    align-items: center;
    padding-left: 126px;
`;

const IndicatorSelect = styled.div`
    width: 118px;
    height: 31px;
    display: flex;
    align-items: center;
    padding-right: 10px;
    border: 1.5px solid #dcdfe6;
    border-radius: 4px;
    background-color: #f6f7fa;
    color: #222;
    font-size: 24px;
    line-height: 28px;
    span {
        flex: 1;
        padding-right: 8px;
        text-align: center;
    }
`;

const IndicatorValue = styled.div`
    display: flex;
    align-items: center;
    margin-left: 4px;
    font-size: 19.5px;
    line-height: 30px;
    letter-spacing: 0.4px;
    svg {
        margin-left: 6px;
    }
`;

const MacdValue = styled.span`
    color: ${(props) => props.$color};
    font-family: "Liberation Serif", serif;
    font-size: 15.7px;
    margin: 0 2px 0 4.5px;
`;

const TimeAxis = styled.div`
    flex: 1;
    display: flex;
    color: #777;
    font-size: 19.5px;
    line-height: 31px;
    letter-spacing: 0.5px;
`;

const StartTime = styled.span`
    width: 122px;
`;

const EndTime = styled.span`
    margin-left: auto;
`;

const Book = styled.div`
    flex: 1;
    border-top: 2px solid white;
    font-size: 21.2px;
    letter-spacing: 0.4px;
`;

const Promo = styled.div`
    height: 41px;
    margin: 3px 0 4px 1px;
    background-color: #fcefe8;
    color: ${ORANGE};
    font-size: 22px;
    line-height: 38px;
    letter-spacing: 0;
    text-align: center;
`;

const BookGroup = styled.div`
    display: flex;
    flex-direction: column;
`;

const BookLine = styled.div`
    height: 34.7px;
    line-height: 34.7px;
    display: grid;
    grid-template-columns: 62px 81px 74px;
`;

const BookSide = styled.span`
    padding-left: 11px;
    color: ${GRAY};
    font-size: 20px;
    i {
        font-style: normal;
        font-size: 21px;
        margin-left: 4px;
    }
`;

const BookPrice = styled.span`
    color: ${RED};
    text-align: right;
`;

const BookVolume = styled.span`
    color: #222;
    text-align: right;
`;

const RatioBar = styled.svg`
    width: 219px;
    height: 5px;
    margin: 8px 0 8px 4px;
`;

const DealsTitle = styled.div`
    height: 38.4px;
    display: flex;
    align-items: center;
    padding: 8px 0 0 66px;
    gap: 19px;
    color: ${GRAY};
    font-size: 23.7px;
    line-height: 39px;
    letter-spacing: 0;
`;

const DealLine = styled.div`
    height: 36.8px;
    line-height: 36.8px;
    display: grid;
    grid-template-columns: 94px 60px 63px;
`;

const DealTime = styled.span`
    padding-left: 10.5px;
    color: ${GRAY};
    letter-spacing: 0.8px;
`;

const DealPrice = styled.span`
    display: flex;
    align-items: center;
    gap: 2px;
    color: ${RED};
`;

const DealVolume = styled.span`
    color: ${(props) => props.$color};
    text-align: right;
`;

const Danmu = styled.div`
    height: 98px;
    flex: none;
    display: flex;
    align-items: center;
    padding: 0 30px;
    gap: 23px;
    border-bottom: 2px solid #f2f2f4;
`;

const RoundButton = styled.div`
    width: 59px;
    height: 59px;
    display: flex;
    align-items: center;
    justify-content: center;
    border: 1.5px solid #dcdee5;
    border-radius: 50%;
    background-color: #f6f7fa;
`;

const DanmuInput = styled.div`
    flex: 1;
    height: 59px;
    display: flex;
    overflow: hidden;
    border: 1.5px solid #dcdee5;
    border-radius: 30px;
    background-color: #f6f7fa;
`;

const Placeholder = styled.div`
    flex: 1;
    padding-left: 29px;
    color: #999;
    font-size: 27.7px;
    line-height: 53px;
`;

const DanmuToggle = styled.div`
    width: 70px;
    position: relative;
    padding-left: 17px;
    border-left: 1.5px solid #dcdee5;
    background-color: white;
    color: #555;
    font-size: 29px;
    font-weight: 700;
    line-height: 56px;
`;

const BanIcon = styled.svg`
    position: absolute;
    width: 16px;
    height: 16px;
    left: 37px;
    top: 31px;
`;

const BannerWrap = styled.div`
    height: 88px;
    flex: none;
    padding: 12px 12px 0;
    border-bottom: 2px solid #eee;
`;

const BannerPill = styled.div`
    height: 65px;
    display: flex;
    align-items: center;
    padding: 0 24px 0 19px;
    border-radius: 33px;
    background-color: #fdede6;
`;

const BannerText = styled.div`
    flex: 1;
    margin-left: 19px;
    color: ${ORANGE};
    font-size: 26.1px;
    line-height: 60px;
`;

const BannerDivider = styled.div`
    width: 1.5px;
    height: 30px;
    margin-right: 14px;
    background-color: ${ORANGE};
`;

const Nav = styled.div`
    height: 92px;
    flex: none;
    margin-top: 2px;
    display: flex;
    border-top: 2px solid #dfe1e6;
    background-color: #f6f8fa;
`;

const IndexBlock = styled.div`
    width: 177px;
    padding-top: 7px;
    display: flex;
    flex-direction: column;
    align-items: center;
`;

const IndexValue = styled.div`
    margin-top: 6px;
    color: ${GREEN};
    font-size: 25px;
    line-height: 34px;
    letter-spacing: 0;
`;

const IndexChange = styled.div`
    padding-left: 23px;
    color: ${GRAY};
    font-size: 25px;
    line-height: 36px;
    span {
        margin-left: 7px;
        color: ${GREEN};
    }
`;

const NavItem = styled.div`
    flex: 1;
    display: flex;
    flex-direction: column;
    align-items: center;
    padding-top: 10px;
    color: ${GRAY};
    font-size: 23.5px;
    line-height: 40px;
`;

const NavIcon = styled.svg`
    width: 42px;
    height: 40px;
    fill: none;
    stroke: #666;
    stroke-width: 2.1;
`;

const HomeArea = styled.div`
    flex: 1;
    display: flex;
    align-items: flex-end;
    justify-content: center;
    padding-bottom: 17px;
    background-color: #f6f8fa;
`;

const HomeIndicator = styled.div`
    width: 274px;
    height: 10px;
    border-radius: 5px;
    background-color: black;
`;
